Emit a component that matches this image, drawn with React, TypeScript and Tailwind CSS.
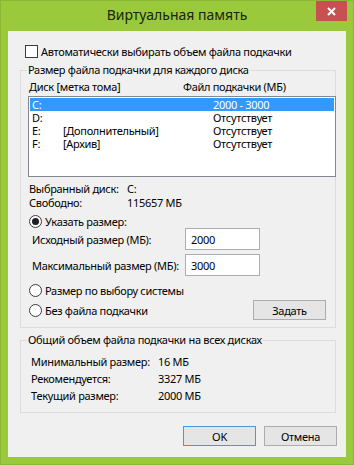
import React from "react"

interface Drive {
  letter: string
  label: string
  size: string
  selected?: boolean
}

const drives: Drive[] = [
  { letter: "C:", label: "", size: "2000 - 3000", selected: true },
  { letter: "D:", label: "", size: "Отсутствует" },
  { letter: "E:", label: "[Дополнительный]", size: "Отсутствует" },
  { letter: "F:", label: "[Архив]", size: "Отсутствует" },
]

function Radio({ checked }: { checked?: boolean }) {
  return (
    <span className="w-[13px] h-[13px] rounded-full border border-[#3c3c3c] bg-white flex items-center justify-center shrink-0">
      {checked && <span className="w-[7px] h-[7px] rounded-full bg-[#1f1f1f]" />}
    </span>
  )
}

function Group({ title, className, children }: { title: string; className: string; children: React.ReactNode }) {
  return (
    <div className={`relative w-[316px] border border-[#dcdcdc] flex flex-col ${className}`}>
      <span className="absolute left-[6px] -top-[9px] px-[1px] bg-[#f0f0f0] leading-[16px]">{title}</span>
      {children}
    </div>
  )
}

function Button({ label, isDefault }: { label: string; isDefault?: boolean }) {
  return (
    <button
      className={`w-[73px] h-[20px] bg-[#e5e5e5] border flex items-center justify-center ${
        isDefault ? "border-[#4a97e0]" : "border-[#acacac]"
      }`}
    >
      {label}
    </button>
  )
}

export default function App() {
  return (
    <div className="w-[354px] h-[465px] bg-[#9aca3c] border border-[#8ab834] font-['Noto_Sans',sans-serif] text-[11px] leading-[13px] tracking-[-0.3px] whitespace-nowrap text-black flex flex-col">
      {/* заголовок окна */}
      <div className="relative h-[30px] flex items-center justify-center pb-[2px]">
        <span className="text-[14px] leading-[18px] tracking-normal text-[#1b240f]">Виртуальная память</span>
        <button className="absolute top-0 right-[6px] w-[31px] h-[20px] bg-[#c75050] flex items-center justify-center">
          <svg width="9" height="9" viewBox="0 0 9 9">
            <path d="M1 1 L8 8 M8 1 L1 8" stroke="white" strokeWidth="2" />
          </svg>
        </button>
      </div>

      <div className="w-[338px] h-[426px] ml-[7px] bg-[#f0f0f0] flex flex-col pl-[12px]">
        <div className="mt-[14px] h-[13px] flex items-center gap-[3px] pl-[5px]">
          <span className="w-[13px] h-[13px] border border-[#3c3c3c] bg-white shrink-0" />
          <span>Автоматически выбирать объем файла подкачки</span>
        </div>

        <Group title="Размер файла подкачки для каждого диска" className="mt-[12px] h-[258px]">
          <div className="mt-[8px] h-[15px] flex items-center">
            <span className="ml-[8px] w-[154px]">Диск [метка тома]</span>
            <span>Файл подкачки (МБ)</span>
          </div>
          <div className="mt-[2px] ml-[7px] w-[308px] h-[81px] border border-[#828790] bg-white p-[1px]">
            {drives.map((d) => (
              <div
                key={d.letter}
                className={`h-[13px] flex items-center pl-[2px] ${d.selected ? "bg-[#3399ff] text-white" : ""}`}
              >
                <span className="w-[31px]">{d.letter}</span>
                <span className="w-[150px]">{d.label}</span>
                <span>{d.size}</span>
              </div>
            ))}
          </div>

          <div className="mt-[4px] h-[14px] flex items-center pl-[8px]">
            <span className="w-[98px]">Выбранный диск:</span>
            <span>C:</span>
          </div>
          <div className="h-[14px] flex items-center pl-[8px]">
            <span className="w-[98px]">Свободно:</span>
            <span>115657 МБ</span>
          </div>

          <div className="mt-[6px] h-[13px] flex items-center gap-[3px] pl-[8px]">
            <Radio checked />
            <span>Указать размер:</span>
          </div>
          <div className="h-[22px] flex items-center">
            <span className="ml-[11px] w-[153px]">Исходный размер (МБ):</span>
            <div className="w-[75px] h-[22px] border border-[#abadb3] bg-white pl-[5px] flex items-center">2000</div>
          </div>
          <div className="mt-[4px] h-[22px] flex items-center">
            <span className="ml-[11px] w-[153px]">Максимальный размер (МБ):</span>
            <div className="w-[75px] h-[22px] border border-[#abadb3] bg-white pl-[5px] flex items-center">3000</div>
          </div>

          <div className="mt-[8px] h-[13px] flex items-center gap-[3px] pl-[8px]">
            <Radio />
            <span>Размер по выбору системы</span>
          </div>
          <div className="mt-[3px] h-[20px] flex items-center gap-[3px] pl-[8px]">
            <Radio />
            <span>Без файла подкачки</span>
            <div className="ml-auto mr-[9px]">
              <Button label="Задать" />
            </div>
          </div>
        </Group>

        <Group title="Общий объем файла подкачки на всех дисках" className="mt-[12px] h-[73px]">
          <div className="mt-[12px] h-[17px] flex items-center pl-[10px]">
            <span className="w-[127px]">Минимальный размер:</span>
            <span>16 МБ</span>
          </div>
          <div className="h-[17px] flex items-center pl-[10px]">
            <span className="w-[127px]">Рекомендуется:</span>
            <span>3327 МБ</span>
          </div>
          <div className="h-[17px] flex items-center pl-[10px]">
            <span className="w-[127px]">Текущий размер:</span>
            <span>2000 МБ</span>
          </div>
        </Group>

        <div className="mt-[13px] flex justify-end gap-[8px] pr-[9px]">
          <Button label="OK" isDefault />
          <Button label="Отмена" />
        </div>
      </div>
    </div>
  )
}
